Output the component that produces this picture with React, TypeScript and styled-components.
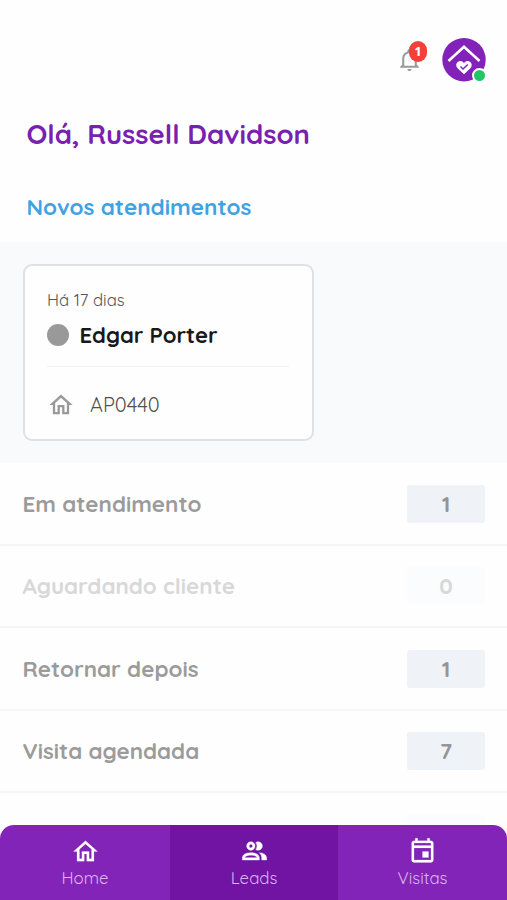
import React from "react";
import styled, { createGlobalStyle } from "styled-components";

const GlobalStyle = createGlobalStyle`
  * { box-sizing: border-box; }
  body {
    margin: 0;
    background: #fff;
    font-family: Quicksand, Lato, sans-serif;
    overflow: hidden;
  }
`;

const Screen = styled.div`
  display: flex;
  flex-direction: column;
  width: 507px;
  height: 900px;
  overflow: hidden;
  background: #fefefe;
`;

const Header = styled.header`
  display: flex;
  justify-content: flex-end;
  align-items: flex-start;
  gap: 20px;
  flex: none;
  height: 109px;
  padding: 38px 21px 0 0;
`;

const BellButton = styled.div`
  position: relative;
  width: 25px;
  height: 34px;
  padding-top: 9px;
  color: #9b9b9b;
`;

const Badge = styled.span`
  position: absolute;
  top: 3px;
  left: 12px;
  width: 18px;
  height: 21px;
  border-radius: 9px;
  background: #f4403a;
  color: #fff;
  font-family: "Noto Sans", sans-serif;
  font-size: 13px;
  font-weight: 700;
  line-height: 21px;
  text-align: center;
`;

const Avatar = styled.div`
  position: relative;
  width: 44px;
  height: 44px;
`;

const Status = styled.span`
  position: absolute;
  left: 30px;
  top: 30px;
  width: 15px;
  height: 15px;
  border: 2px solid #fff;
  border-radius: 50%;
  background: #22c667;
`;

const Text = styled.span<{ $w: number }>`
  font-weight: ${(p) => p.$w};
  white-space: nowrap;
`;

const Greeting = styled.h1`
  flex: none;
  margin: 0;
  height: 73px;
  padding-left: 26.5px;
  font-size: 27.5px;
  line-height: 49px;
  color: #7b1fb0;
`;

const SectionTitle = styled.h2`
  flex: none;
  margin: 0;
  height: 60px;
  padding-left: 26.5px;
  font-size: 22.5px;
  line-height: 50px;
  color: #3fa2e2;
`;

const CardBand = styled.section`
  flex: none;
  height: 221px;
  padding: 22px 23px;
  background: #f9fafc;
`;

const Card = styled.article`
  width: 291px;
  height: 177px;
  padding: 21px 23px 0 22px;
  border: 2px solid #dfe1e2;
  border-radius: 9px;
  background: #fefefe;
`;

const Age = styled.div`
  height: 27px;
  font-size: 16.7px;
  line-height: 26px;
  color: #555;
`;

const Person = styled.div`
  display: flex;
  align-items: center;
  gap: 10.5px;
  height: 53px;
  padding-bottom: 10px;
  border-bottom: 1px solid #f1f1f1;
  font-size: 22.1px;
  color: #18191a;
`;

const Dot = styled.span`
  flex: none;
  width: 22px;
  height: 22px;
  border-radius: 50%;
  background: #999;
`;

const Property = styled.div`
  display: flex;
  align-items: center;
  gap: 15px;
  height: 75px;
  color: #505050;
  font-size: 20px;
  svg { color: #999; }
`;

const List = styled.main`
  flex: 1;
  min-height: 0;
  overflow: hidden;
`;

const Row = styled.div<{ $faded?: boolean }>`
  display: flex;
  align-items: center;
  justify-content: space-between;
  height: 82.5px;
  padding: 1px 22px 0 22.5px;
  border-bottom: 2px solid #f6f6f6;
  font-size: 22.4px;
  line-height: 28px;
  color: ${(p) => (p.$faded ? "#d8d8d8" : "#9b9b9b")};
`;

const Count = styled.span<{ $faded?: boolean }>`
  margin-left: auto;
  width: 78px;
  height: 38px;
  border-radius: 3px;
  background: ${(p) => (p.$faded ? "#fafcfd" : "#eff3f8")};
  font-size: 22px;
  font-weight: 700;
  line-height: 38px;
  text-align: center;
  color: ${(p) => (p.$faded ? "#d8d8d8" : "#949597")};
`;

const Nav = styled.nav`
  display: grid;
  grid-template-columns: 170px 168px 1fr;
  flex: none;
  height: 75.5px;
  overflow: hidden;
  border-radius: 14px 14px 0 0;
  background: #8324b9;
`;

const Tab = styled.div<{ $active?: boolean }>`
  display: flex;
  flex-direction: column;
  align-items: center;
  padding-top: 12.5px;
  background: ${(p) => (p.$active ? "#7113a3" : "transparent")};
  color: #fff;
  font-size: 16.8px;
  line-height: 23px;
`;

const TabLabel = styled(Text)`
  color: #d9b4ec;
`;

const paths = {
  home: "M12 5.69L17 10.19V18H15V12H9V18H7V10.19L12 5.69M12 3L2 12H5V20H11V14H13V20H19V12H22Z",
  bell: "M10 21H14C14 22.1 13.1 23 12 23S10 22.1 10 21M21 19V20H3V19L5 17V11C5 7.9 7.03 5.17 10 4.29V4C10 2.9 10.9 2 12 2S14 2.9 14 4V4.29C16.97 5.17 19 7.9 19 11V17L21 19M17 11C17 8.24 14.76 6 12 6S7 8.24 7 11V18H17V11Z",
  people:
    "M13.07 10.41A5 5 0 0 0 13.07 4.59A3.39 3.39 0 0 1 15 4A3.5 3.5 0 0 1 15 11A3.39 3.39 0 0 1 13.07 10.41M5.5 7.5A3.5 3.5 0 1 1 9 11A3.5 3.5 0 0 1 5.5 7.5M7.5 7.5A1.5 1.5 0 1 0 9 6A1.5 1.5 0 0 0 7.5 7.5M16 17V19H2V17S2 13 9 13 16 17 16 17M14 17C13.86 16.22 12.67 15 9 15S4.07 16.31 4 17M15.95 13A5.32 5.32 0 0 1 18 17V19H22V17S22 13.37 15.94 13Z",
  calendar:
    "M19 3H18V1H16V3H8V1H6V3H5C3.9 3 3 3.9 3 5V19C3 20.1 3.9 21 5 21H19C20.1 21 21 20.1 21 19V5C21 3.9 20.1 3 19 3M19 19H5V9H19V19M19 7H5V5H19V7M17 12H12V17H17V12Z",
};

function Icon({ name, size, stroke = 0 }: { name: keyof typeof paths; size: number; stroke?: number }) {
  return (
    <svg
      width={size}
      height={size}
      viewBox="0 0 24 24"
      fill="currentColor"
      stroke="currentColor"
      strokeWidth={stroke}
    >
      <path d={paths[name]} />
    </svg>
  );
}

const rows = [
  { label: "Em atendimento", count: 1 },
  { label: "Aguardando cliente", count: 0, faded: true },
  { label: "Retornar depois", count: 1 },
  { label: "Visita agendada", count: 7 },
];

const tabs: { label: string; icon: keyof typeof paths; active?: boolean }[] = [
  { label: "Home", icon: "home" },
  { label: "Leads", icon: "people", active: true },
  { label: "Visitas", icon: "calendar" },
];

export default function App() {
  return (
    <>
      <GlobalStyle />
      <Screen>
        <Header>
          <BellButton>
            <Icon name="bell" size={25} />
            <Badge>1</Badge>
          </BellButton>
          <Avatar>
            <svg width="44" height="44" viewBox="0 0 44 44" fill="none">
              <circle cx="22" cy="21.7" r="21.7" fill="#8222b8" />
              <path d="M6.5 23L22 8.8L37.5 23" stroke="#fff" strokeWidth="2.6" />
              <path
                d="M22 36.3L15.6 30.2C12.6 27 15.1 22.8 18.6 23.1C20.3 23.3 21.4 24.2 22 25.2C22.6 24.2 23.7 23.3 25.4 23.1C28.9 22.8 31.4 27 28.4 30.2Z"
                fill="#fff"
              />
              <path d="M18.5 28.5L21 31L25.8 26.5" stroke="#8222b8" strokeWidth="1.4" />
            </svg>
            <Status />
          </Avatar>
        </Header>
        <Greeting>
          <Text $w={700}>Olá, Russell Davidson</Text>
        </Greeting>
        <SectionTitle>
          <Text $w={700}>Novos atendimentos</Text>
        </SectionTitle>
        <CardBand>
          <Card>
            <Age>
              <Text $w={400}>Há 17 dias</Text>
            </Age>
            <Person>
              <Dot />
              <Text $w={700}>Edgar Porter</Text>
            </Person>
            <Property>
              <Icon name="home" size={28} />
              <Text $w={400}>AP0440</Text>
            </Property>
          </Card>
        </CardBand>
        <List>
          {rows.map((r) => (
            <Row key={r.label} $faded={r.faded}>
              <Text $w={700}>{r.label}</Text>
              <Count $faded={r.faded}>{r.count}</Count>
            </Row>
          ))}
          <Row $faded>
            <Count $faded />
          </Row>
        </List>
        <Nav>
          {tabs.map((t) => (
            <Tab key={t.label} $active={t.active}>
              <Icon name={t.icon} size={29} stroke={t.active ? 0.35 : 0.15} />
              <TabLabel $w={400}>{t.label}</TabLabel>
            </Tab>
          ))}
        </Nav>
      </Screen>
    </>
  );
}
